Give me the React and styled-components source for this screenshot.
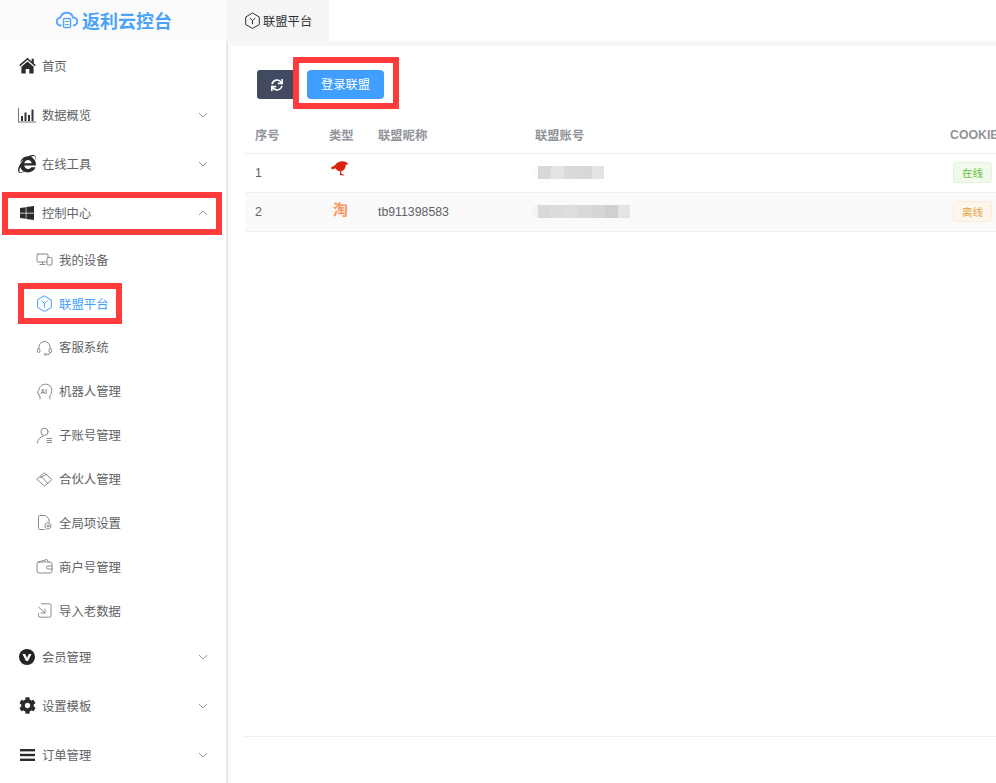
import React from "react";
import styled, { createGlobalStyle } from "styled-components";
import { FaInternetExplorer, FaWindows, FaCog, FaSync } from "react-icons/fa";

const Global = createGlobalStyle`
  html, body { margin: 0; padding: 0; background: #fff; overflow: hidden; }
  * { box-sizing: border-box; }
  body { font-family: "Noto Sans CJK SC", "Liberation Sans", sans-serif; }
`;

const Page = styled.div`
  position: relative;
  width: 996px;
  height: 783px;
  overflow: hidden;
  display: flex;
  flex-direction: column;
  background: #fff;
`;
const TopBar = styled.header`
  height: 41px;
  flex: none;
  display: flex;
  background: #fff;
`;
const Brand = styled.div`
  width: 227px;
  background: #fbfbfb;
  display: flex;
  align-items: center;
  justify-content: center;
  gap: 4px;
  color: #4ba3f8;
  font-size: 18px;
  line-height: 24px;
  font-weight: 700;
  padding: 0 0 2px 1px;
`;
const Tab = styled.div`
  width: 102px;
  background: #f5f5f5;
  display: flex;
  align-items: center;
  padding-left: 17px;
  gap: 2px;
  font-size: 12.3px;
  color: #303133;
`;
const Body = styled.div`
  flex: 1;
  display: flex;
  min-height: 0;
`;
const Sidebar = styled.nav`
  width: 228px;
  flex: none;
  background: #fff;
  border-right: 2px solid #e8e8f0;
  overflow: hidden;
`;
const MenuRow = styled.div`
  height: 49px;
  display: flex;
  align-items: center;
  padding: 0 18px 0 18px;
  gap: 6px;
  font-size: 12.3px;
  color: #606266;
`;
const MenuIcon = styled.span`
  width: 18px;
  height: 18px;
  flex: none;
  display: flex;
  align-items: center;
  justify-content: center;
  color: #2b2b2b;
  font-size: ${(p) => p.$size || 16}px;
`;
const MenuLabel = styled.span`
  flex: 1;
`;
const SubList = styled.div`
  height: 395px;
  padding-top: 0.7px;
`;
const SubRow = styled.div`
  height: 43.9px;
  display: flex;
  align-items: center;
  padding-left: 36px;
  gap: 6px;
  font-size: 12.4px;
  color: ${(p) => (p.$active ? "#409eff" : "#606266")};
`;
const SubIcon = styled.svg`
  width: 17px;
  height: 17px;
  flex: none;
  fill: none;
  stroke: ${(p) => (p.$active ? "#6db3fb" : "#8a8a8a")};
  stroke-width: 1;
  stroke-linejoin: round;
  stroke-linecap: round;
`;
const AiText = styled.text`
  font-family: "Liberation Sans", sans-serif;
  font-size: 6.5px;
  font-weight: 700;
  fill: #8a8a8a;
  stroke: none;
`;
const Chevron = styled.svg`
  width: 10px;
  height: 6px;
  flex: none;
  fill: none;
  stroke: #999;
  stroke-width: 1;
`;
const Main = styled.main`
  flex: 1;
  min-width: 0;
  background: #f7f7f9;
  padding: 5px 0 0 3px;
  display: flex;
`;
const Panel = styled.section`
  flex: 1;
  min-width: 0;
  background: #fff;
  padding: 24px 0 0 14px;
  overflow: hidden;
`;
const Toolbar = styled.div`
  display: flex;
  gap: 10px;
  padding-left: 12px;
  height: 29px;
`;
const RefreshButton = styled.button`
  width: 40px;
  height: 29px;
  border: 0;
  border-radius: 3px;
  background: #414a60;
  color: #fff;
  font-size: 12px;
  padding: 0;
  display: flex;
  align-items: center;
  justify-content: center;
`;
const LoginButton = styled.button`
  width: 77px;
  height: 29px;
  border: 0;
  border-radius: 4px;
  background: #409eff;
  color: #fff;
  font-family: inherit;
  font-size: 12.3px;
  padding: 0 0 2px;
`;
const TableBox = styled.div`
  margin-top: 16px;
  height: 622px;
  border-bottom: 1px solid #ebeef5;
  overflow: hidden;
`;
const Table = styled.table`
  width: 760px;
  table-layout: fixed;
  border-collapse: collapse;
  font-size: 12.3px;
`;
const Th = styled.th`
  height: 38px;
  padding: 3px 0 0 10px;
  text-align: left;
  font-weight: 700;
  color: #909399;
  font-size: 12.3px;
  font-family: "Liberation Sans", "Noto Sans CJK SC", sans-serif;
  border-bottom: 1px solid #ebeef5;
  white-space: nowrap;
`;
const Tr = styled.tr`
  background: ${(p) => (p.$striped ? "#fafafa" : "#fff")};
`;
const Td = styled.td`
  height: 39px;
  padding: 0 0 0 10px;
  color: #606266;
  font-family: "Liberation Sans", "Noto Sans CJK SC", sans-serif;
  border-bottom: 1px solid #ebeef5;
  text-align: ${(p) => p.$align || "left"};
  ${(p) => p.$align === "center" && "padding: 0;"}
`;
const TaoIcon = styled.span`
  display: block;
  color: #fa9560;
  font-family: "Noto Sans CJK SC", sans-serif;
  font-size: 15px;
  font-weight: 700;
  line-height: 15px;
  margin: -7px 0 0 4px;
`;
const BirdWrap = styled.svg`
  display: block;
  width: 18px;
  height: 15px;
  margin: -8px 0 0 2px;
`;
const BlurBar = styled.div`
  display: flex;
  height: 13px;
  margin-left: -3px;
`;
const BlurCell = styled.span`
  display: block;
  height: 100%;
  width: ${(p) => p.$w}px;
  background: ${(p) => p.$c};
  &:first-child {
    border-radius: 6px 0 0 6px;
  }
`;
const Tag = styled.span`
  display: inline-block;
  width: 39px;
  height: 21px;
  line-height: 19px;
  font-size: 10.5px;
  font-family: "Noto Sans CJK SC", sans-serif;
  text-align: center;
  border-radius: 3px;
  border: 1px solid ${(p) => (p.$on ? "#e1f3d8" : "#faecd8")};
  background: ${(p) => (p.$on ? "#f0f9eb" : "#fdf6ec")};
  color: ${(p) => (p.$on ? "#67c23a" : "#e6a23c")};
`;
const Callout = styled.div`
  position: absolute;
  left: ${(p) => p.$x}px;
  top: ${(p) => p.$y}px;
  width: ${(p) => p.$w}px;
  height: ${(p) => p.$h}px;
  border: 6px solid #ff3b3b;
  pointer-events: none;
`;
const HexY = ({ stroke = "currentColor", width = 1 }) => (
  <>
    <path d="M8.5 1 15.3 5v7.600L8.500 16.400l-6.800-3.800V5z" stroke={stroke} strokeWidth={width} fill="none" />
    <path d="M5.800 6 8.500 8.600 11.200 6M8.500 8.600v3.600" stroke={stroke} strokeWidth={width} fill="none" />
  </>
);

const subIcons = {
  devices: (
    <>
      <rect x="1" y="3" width="11" height="8" rx="1" />
      <path d="M4 13.500h5M6.500 11v2.500" />
      <rect x="11" y="6.500" width="5" height="7.500" rx="1" fill="#fff" />
    </>
  ),
  hex: <HexY />,
  headset: (
    <>
      <path d="M3 9.500V8a5.500 5.500 0 0 1 11 0v1.500" />
      <rect x="1.300" y="9.500" width="2.600" height="4" rx="1.300" />
      <rect x="13.100" y="9.500" width="2.600" height="4" rx="1.300" />
      <path d="M14.400 13.500c0 1.600-1.800 2-3.700 2" />
      <circle cx="9.400" cy="15.400" r="1" />
    </>
  ),
  ai: (
    <>
      <path d="M4 16v-3.200H2.800v-2.300L1 9.700l1.800-2.400C3 3.600 6 1.200 9.500 1.200c3.700 0 6.300 2.800 6.300 6 0 2.500-1 4.300-2 5.600V16" />
      <AiText x="4.600" y="10.800">AI</AiText>
    </>
  ),
  user: (
    <>
      <circle cx="8.500" cy="4.800" r="3.600" />
      <path d="M1.500 16c0-3.500 2.500-6.300 5.500-6.800" />
      <path d="M11 11.500h4.500M11 13.500h4.500M11 15.500h4.500" />
    </>
  ),
  partner: (
    <>
      <path d="M8.500 2 16 8.500 8.500 15 1 8.500z" />
      <path d="M5 5.500 11.500 12M4.500 6.500l6.500-3.500" />
    </>
  ),
  fileCog: (
    <>
      <path d="M8.500 15.500H3.500a1 1 0 0 1-1-1v-12a1 1 0 0 1 1-1h6l3.500 3.500v3" />
      <path d="M12 8.800l2.800 1.600v3.200L12 15.200l-2.800-1.600v-3.200z" />
      <circle cx="12" cy="12" r="1" />
    </>
  ),
  wallet: (
    <>
      <rect x="1" y="4" width="15" height="11" rx="2" />
      <path d="M2.500 4 11 1.500l1.500 2.500" />
      <path d="M16 8h-4a1.500 1.500 0 0 0 0 3h4" />
    </>
  ),
  import: (
    <>
      <path d="M5.500 1.800h8a1.500 1.500 0 0 1 1.500 1.500v10.400a1.500 1.500 0 0 1-1.500 1.500H4a1.500 1.500 0 0 1-1.500-1.500v-2" />
      <path d="M2.500 5 9 11M9 7v4H5" />
    </>
  ),
};

const HomeIcon = () => (
  <svg width="17" height="17" viewBox="0 0 17 17" fill="#2b2b2b">
    <path d="M8.500 .800 12.600 4.400V1.800h2.200v4.500l2 1.800-1 1.100-7.300-6.400-7.300 6.400-1-1.100z" />
    <path d="M8.500 4.500 14.600 9.800v6.700h-4.300v-4.600H6.700v4.600H2.400V9.800z" />
  </svg>
);
const BarChartIcon = () => (
  <svg width="18" height="16" viewBox="0 0 18 16" fill="#333">
    <rect x="0" y="1" width="1" height="14" fill="#777" />
    <rect x="0" y="14.500" width="18" height="1" fill="#777" />
    <rect x="3" y="9" width="2" height="5" />
    <rect x="6.500" y="5.500" width="2" height="8.500" />
    <rect x="10" y="8" width="2" height="6" />
    <rect x="13.500" y="2.500" width="2" height="11.500" />
  </svg>
);
const VBadge = () => (
  <svg width="16" height="16" viewBox="0 0 16 16">
    <circle cx="8" cy="8" r="8" fill="#242424" />
    <path d="M3.500 5h2.700L8 9l1.800-4h2.700L9 12H7z" fill="#fff" />
  </svg>
);
const MenuLines = () => (
  <svg width="15" height="12" viewBox="0 0 15 12" fill="#2b2b2b">
    <rect y="0" width="15" height="2.400" />
    <rect y="4.800" width="15" height="2.400" />
    <rect y="9.600" width="15" height="2.400" />
  </svg>
);

const Arrow = ({ up }) => (
  <Chevron viewBox="0 0 10 6">
    <polyline points={up ? "1,5 5,1 9,5" : "1,1 5,5 9,1"} />
  </Chevron>
);

const MainItem = ({ icon, label, chevron, size }) => (
  <MenuRow>
    <MenuIcon $size={size}>{icon}</MenuIcon>
    <MenuLabel>{label}</MenuLabel>
    {chevron && <Arrow up={chevron === "up"} />}
  </MenuRow>
);

const subItems = [
  ["devices", "我的设备"],
  ["hex", "联盟平台", true],
  ["headset", "客服系统"],
  ["ai", "机器人管理"],
  ["user", "子账号管理"],
  ["partner", "合伙人管理"],
  ["fileCog", "全局项设置"],
  ["wallet", "商户号管理"],
  ["import", "导入老数据"],
];

const blurA = [[6, "#fcfcfc"], [13, "#d8d8da"], [13, "#e4e4e6"], [14, "#dadadc"], [14, "#d8d8da"], [12, "#e4e4e6"]];
const blurB = [[6, "#f3f3f4"], [13, "#d8d8da"], [13, "#dcdcde"], [14, "#dedee0"], [14, "#d9d9db"], [13, "#d6d6d8"], [13, "#d0d0d2"], [12, "#e4e4e6"]];

const Blur = ({ cells }) => (
  <BlurBar>
    {cells.map(([w, c], i) => (
      <BlurCell key={i} $w={w} $c={c} />
    ))}
  </BlurBar>
);

export default function App() {
  return (
    <Page>
      <Global />
      <TopBar>
        <Brand>
          <svg width="22" height="18" viewBox="0 0 22 18" fill="none" stroke="#5aa9f8" strokeWidth="2">
            <path d="M5.500 14.500H5a4 4 0 0 1-.5-8A6.500 6.500 0 0 1 17 6.500a4 4 0 0 1 .5 8H17" />
            <rect x="7.500" y="7.500" width="7" height="9" rx="1" strokeWidth="1.500" />
            <path d="M9 10.500h4M9 13.500h4" strokeWidth="1.200" />
          </svg>
          <span>返利云控台</span>
        </Brand>
        <Tab>
          <svg width="17" height="17" viewBox="0 0 17 17">
            <HexY stroke="#333" />
          </svg>
          <span>联盟平台</span>
        </Tab>
      </TopBar>
      <Body>
        <Sidebar>
          <MainItem icon={<HomeIcon />} label="首页" />
          <MainItem icon={<BarChartIcon />} label="数据概览" chevron="down" />
          <MainItem icon={<FaInternetExplorer />} size={18} label="在线工具" chevron="down" />
          <MainItem icon={<FaWindows />} label="控制中心" chevron="up" />
          <SubList>
            {subItems.map(([key, label, active]) => (
              <SubRow key={key} $active={active}>
                <SubIcon viewBox="0 0 17 17" $active={active}>
                  {subIcons[key]}
                </SubIcon>
                <span>{label}</span>
              </SubRow>
            ))}
          </SubList>
          <MainItem icon={<VBadge />} label="会员管理" chevron="down" />
          <MainItem icon={<FaCog />} size={17} label="设置模板" chevron="down" />
          <MainItem icon={<MenuLines />} label="订单管理" chevron="down" />
        </Sidebar>
        <Main>
          <Panel>
            <Toolbar>
              <RefreshButton aria-label="刷新">
                <FaSync />
              </RefreshButton>
              <LoginButton>登录联盟</LoginButton>
            </Toolbar>
            <TableBox>
              <Table>
                <colgroup>
                  <col style={{ width: 74 }} />
                  <col style={{ width: 49 }} />
                  <col style={{ width: 157 }} />
                  <col style={{ width: 415 }} />
                  <col style={{ width: 65 }} />
                </colgroup>
                <thead>
                  <tr>
                    <Th>序号</Th>
                    <Th>类型</Th>
                    <Th>联盟昵称</Th>
                    <Th>联盟账号</Th>
                    <Th>COOKIE</Th>
                  </tr>
                </thead>
                <tbody>
                  <Tr>
                    <Td>1</Td>
                    <Td>
                      <BirdWrap viewBox="0 0 18 15">
                        <path
                          d="M0 6.500 4 4.300C5.500 1.800 8.500.300 11.500.300c2.500 0 4.500 1.200 6 2.900l-2.800.600c.200 2.500-1 4.700-2.800 5.800-.700.400-1.300.600-1.800.700l.500 2.700 2.600.800-.300.700-4-.500.300-3.600C6.200 9.600 5 8.400 4.300 7.300L1 8.500z"
                          fill="#d8230f"
                        />
                      </BirdWrap>
                    </Td>
                    <Td />
                    <Td>
                      <Blur cells={blurA} />
                    </Td>
                    <Td $align="center">
                      <Tag $on>在线</Tag>
                    </Td>
                  </Tr>
                  <Tr $striped>
                    <Td>2</Td>
                    <Td>
                      <TaoIcon>淘</TaoIcon>
                    </Td>
                    <Td>tb911398583</Td>
                    <Td>
                      <Blur cells={blurB} />
                    </Td>
                    <Td $align="center">
                      <Tag>离线</Tag>
                    </Td>
                  </Tr>
                </tbody>
              </Table>
            </TableBox>
          </Panel>
        </Main>
      </Body>
      <Callout $x={2} $y={192} $w={220} $h={43} />
      <Callout $x={18} $y={283} $w={104} $h={41} />
      <Callout $x={293} $y={57} $w={106} $h={52} />
    </Page>
  );
}
